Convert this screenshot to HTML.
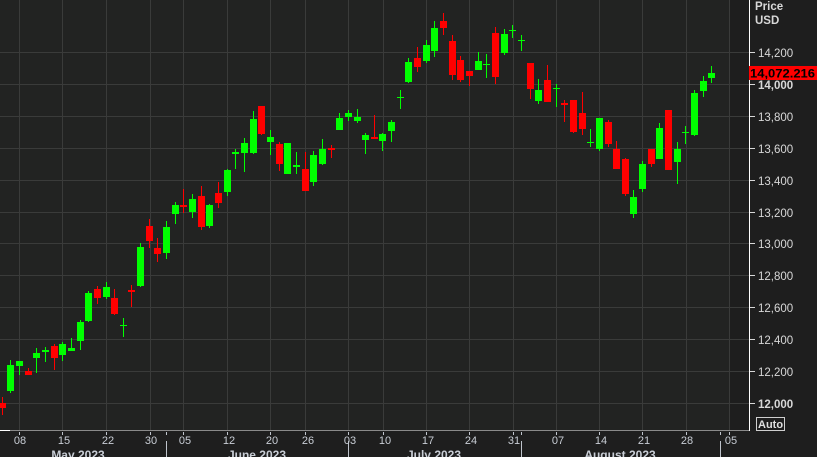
<!DOCTYPE html>
<html><head><meta charset="utf-8"><style>
html,body{margin:0;padding:0;background:#1e1e1e;width:817px;height:457px;overflow:hidden}
svg{display:block;font-family:"Liberation Sans",sans-serif}
</style></head><body>
<svg width="817" height="457" viewBox="0 0 817 457" xmlns="http://www.w3.org/2000/svg">
<rect x="0" y="0" width="817" height="457" fill="#1e1e1e"/>
<rect x="0" y="0" width="729" height="430" fill="#222322"/>
<g stroke="#3a3b3a" stroke-width="1">
<line x1="0" y1="52.5" x2="749" y2="52.5"/><line x1="0" y1="84.5" x2="749" y2="84.5"/><line x1="0" y1="116.5" x2="749" y2="116.5"/><line x1="0" y1="148.5" x2="749" y2="148.5"/><line x1="0" y1="180.5" x2="749" y2="180.5"/><line x1="0" y1="212.5" x2="749" y2="212.5"/><line x1="0" y1="243.5" x2="749" y2="243.5"/><line x1="0" y1="275.5" x2="749" y2="275.5"/><line x1="0" y1="307.5" x2="749" y2="307.5"/><line x1="0" y1="339.5" x2="749" y2="339.5"/><line x1="0" y1="371.5" x2="749" y2="371.5"/><line x1="0" y1="403.5" x2="749" y2="403.5"/>
<line x1="19.5" y1="0" x2="19.5" y2="430"/><line x1="62.5" y1="0" x2="62.5" y2="430"/><line x1="106.5" y1="0" x2="106.5" y2="430"/><line x1="150.5" y1="0" x2="150.5" y2="430"/><line x1="183.5" y1="0" x2="183.5" y2="430"/><line x1="227.5" y1="0" x2="227.5" y2="430"/><line x1="270.5" y1="0" x2="270.5" y2="430"/><line x1="305.5" y1="0" x2="305.5" y2="430"/><line x1="348.5" y1="0" x2="348.5" y2="430"/><line x1="383.5" y1="0" x2="383.5" y2="430"/><line x1="426.5" y1="0" x2="426.5" y2="430"/><line x1="469.5" y1="0" x2="469.5" y2="430"/><line x1="513.5" y1="0" x2="513.5" y2="430"/><line x1="556.5" y1="0" x2="556.5" y2="430"/><line x1="599.5" y1="0" x2="599.5" y2="430"/><line x1="642.5" y1="0" x2="642.5" y2="430"/><line x1="686.5" y1="0" x2="686.5" y2="430"/><line x1="729.5" y1="0" x2="729.5" y2="430"/>
</g>
<g fill="#ff0000">
<rect x="2" y="397" width="1" height="18"/><rect x="-1" y="403" width="7" height="5"/>
<rect x="28" y="368" width="1" height="7"/><rect x="25" y="371" width="7" height="4"/>
<rect x="54" y="344" width="1" height="26"/><rect x="51" y="346" width="7" height="12"/>
<rect x="97" y="286" width="1" height="18"/><rect x="94" y="289" width="7" height="9"/>
<rect x="114" y="289" width="1" height="26"/><rect x="111" y="298" width="7" height="16"/>
<rect x="131" y="285" width="1" height="22"/><rect x="128" y="290" width="7" height="2"/>
<rect x="149" y="219" width="1" height="29"/><rect x="146" y="226" width="7" height="15"/>
<rect x="157" y="238" width="1" height="24"/><rect x="154" y="248" width="7" height="6"/>
<rect x="183" y="189" width="1" height="24"/><rect x="180" y="205" width="7" height="2"/>
<rect x="201" y="186" width="1" height="44"/><rect x="198" y="196" width="7" height="31"/>
<rect x="218" y="182" width="1" height="26"/><rect x="215" y="193" width="7" height="10"/>
<rect x="261" y="106" width="1" height="29"/><rect x="258" y="106" width="7" height="28"/>
<rect x="279" y="142" width="1" height="29"/><rect x="276" y="144" width="7" height="20"/>
<rect x="305" y="152" width="1" height="39"/><rect x="302" y="169" width="7" height="22"/>
<rect x="331" y="145" width="1" height="13"/><rect x="328" y="148" width="7" height="2"/>
<rect x="374" y="115" width="1" height="24"/><rect x="371" y="137" width="7" height="2"/>
<rect x="417" y="47" width="1" height="25"/><rect x="414" y="58" width="7" height="9"/>
<rect x="443" y="13" width="1" height="22"/><rect x="440" y="21" width="7" height="7"/>
<rect x="452" y="35" width="1" height="45"/><rect x="449" y="41" width="7" height="34"/>
<rect x="460" y="56" width="1" height="26"/><rect x="457" y="60" width="7" height="20"/>
<rect x="469" y="71" width="1" height="15"/><rect x="466" y="71" width="7" height="5"/>
<rect x="495" y="27" width="1" height="57"/><rect x="492" y="33" width="7" height="44"/>
<rect x="530" y="63" width="1" height="36"/><rect x="527" y="63" width="7" height="26"/>
<rect x="547" y="65" width="1" height="37"/><rect x="544" y="80" width="7" height="22"/>
<rect x="564" y="100" width="1" height="22"/><rect x="561" y="103" width="7" height="2"/>
<rect x="573" y="100" width="1" height="33"/><rect x="570" y="100" width="7" height="32"/>
<rect x="582" y="92" width="1" height="43"/><rect x="579" y="113" width="7" height="16"/>
<rect x="608" y="120" width="1" height="27"/><rect x="605" y="122" width="7" height="22"/>
<rect x="616" y="141" width="1" height="28"/><rect x="613" y="149" width="7" height="20"/>
<rect x="625" y="158" width="1" height="38"/><rect x="622" y="159" width="7" height="35"/>
<rect x="651" y="149" width="1" height="18"/><rect x="648" y="149" width="7" height="15"/>
<rect x="668" y="110" width="1" height="60"/><rect x="665" y="110" width="7" height="60"/>
</g>
<g fill="#00ff00">
<rect x="10" y="360" width="1" height="33"/><rect x="7" y="365" width="7" height="26"/>
<rect x="19" y="361" width="1" height="14"/><rect x="16" y="361" width="7" height="5"/>
<rect x="36" y="348" width="1" height="25"/><rect x="33" y="353" width="7" height="5"/>
<rect x="45" y="347" width="1" height="15"/><rect x="42" y="350" width="7" height="2"/>
<rect x="62" y="342" width="1" height="19"/><rect x="59" y="344" width="7" height="11"/>
<rect x="71" y="338" width="1" height="13"/><rect x="68" y="348" width="7" height="3"/>
<rect x="80" y="320" width="1" height="30"/><rect x="77" y="322" width="7" height="19"/>
<rect x="88" y="291" width="1" height="31"/><rect x="85" y="293" width="7" height="28"/>
<rect x="106" y="282" width="1" height="17"/><rect x="103" y="287" width="7" height="10"/>
<rect x="123" y="318" width="1" height="19"/><rect x="120" y="325" width="7" height="1"/>
<rect x="140" y="243" width="1" height="44"/><rect x="137" y="247" width="7" height="39"/>
<rect x="166" y="221" width="1" height="38"/><rect x="163" y="227" width="7" height="26"/>
<rect x="175" y="202" width="1" height="22"/><rect x="172" y="205" width="7" height="9"/>
<rect x="192" y="194" width="1" height="24"/><rect x="189" y="199" width="7" height="13"/>
<rect x="209" y="204" width="1" height="24"/><rect x="206" y="205" width="7" height="21"/>
<rect x="227" y="169" width="1" height="27"/><rect x="224" y="170" width="7" height="22"/>
<rect x="235" y="149" width="1" height="20"/><rect x="232" y="152" width="7" height="2"/>
<rect x="244" y="138" width="1" height="34"/><rect x="241" y="143" width="7" height="10"/>
<rect x="253" y="111" width="1" height="43"/><rect x="250" y="119" width="7" height="34"/>
<rect x="270" y="130" width="1" height="25"/><rect x="267" y="137" width="7" height="5"/>
<rect x="287" y="143" width="1" height="31"/><rect x="284" y="143" width="7" height="31"/>
<rect x="296" y="152" width="1" height="22"/><rect x="293" y="165" width="7" height="2"/>
<rect x="313" y="151" width="1" height="35"/><rect x="310" y="155" width="7" height="27"/>
<rect x="322" y="139" width="1" height="26"/><rect x="319" y="149" width="7" height="15"/>
<rect x="339" y="113" width="1" height="17"/><rect x="336" y="118" width="7" height="12"/>
<rect x="348" y="110" width="1" height="11"/><rect x="345" y="113" width="7" height="4"/>
<rect x="357" y="109" width="1" height="14"/><rect x="354" y="117" width="7" height="4"/>
<rect x="365" y="133" width="1" height="21"/><rect x="362" y="135" width="7" height="5"/>
<rect x="382" y="133" width="1" height="18"/><rect x="379" y="134" width="7" height="7"/>
<rect x="391" y="120" width="1" height="22"/><rect x="388" y="122" width="7" height="9"/>
<rect x="400" y="90" width="1" height="19"/><rect x="397" y="97" width="7" height="1"/>
<rect x="408" y="58" width="1" height="25"/><rect x="405" y="62" width="7" height="20"/>
<rect x="426" y="40" width="1" height="23"/><rect x="423" y="45" width="7" height="16"/>
<rect x="434" y="21" width="1" height="36"/><rect x="431" y="28" width="7" height="23"/>
<rect x="478" y="52" width="1" height="18"/><rect x="475" y="61" width="7" height="9"/>
<rect x="486" y="54" width="1" height="24"/><rect x="483" y="64" width="7" height="1"/>
<rect x="504" y="29" width="1" height="26"/><rect x="501" y="34" width="7" height="19"/>
<rect x="512" y="25" width="1" height="13"/><rect x="509" y="30" width="7" height="1"/>
<rect x="521" y="35" width="1" height="16"/><rect x="518" y="40" width="7" height="1"/>
<rect x="538" y="79" width="1" height="25"/><rect x="535" y="90" width="7" height="11"/>
<rect x="556" y="84" width="1" height="23"/><rect x="553" y="88" width="7" height="1"/>
<rect x="590" y="129" width="1" height="18"/><rect x="587" y="142" width="7" height="1"/>
<rect x="599" y="118" width="1" height="33"/><rect x="596" y="118" width="7" height="31"/>
<rect x="633" y="190" width="1" height="28"/><rect x="630" y="197" width="7" height="17"/>
<rect x="642" y="161" width="1" height="31"/><rect x="639" y="164" width="7" height="25"/>
<rect x="659" y="123" width="1" height="36"/><rect x="656" y="128" width="7" height="31"/>
<rect x="677" y="142" width="1" height="42"/><rect x="674" y="149" width="7" height="13"/>
<rect x="685" y="126" width="1" height="18"/><rect x="682" y="132" width="7" height="1"/>
<rect x="694" y="90" width="1" height="46"/><rect x="691" y="93" width="7" height="42"/>
<rect x="703" y="76" width="1" height="21"/><rect x="700" y="81" width="7" height="10"/>
<rect x="711" y="66" width="1" height="17"/><rect x="708" y="73" width="7" height="5"/>
</g>
<rect x="10" y="430" width="739" height="1" fill="#8a8a8a"/>
<rect x="0" y="430" width="10" height="1" fill="#ffffff"/>
<rect x="749" y="0" width="1" height="431" fill="#ffffff"/>
<g fill="#d8d8d8">
<rect x="750" y="52" width="5" height="1"/><rect x="750" y="84" width="5" height="1"/><rect x="750" y="116" width="5" height="1"/><rect x="750" y="148" width="5" height="1"/><rect x="750" y="180" width="5" height="1"/><rect x="750" y="212" width="5" height="1"/><rect x="750" y="243" width="5" height="1"/><rect x="750" y="275" width="5" height="1"/><rect x="750" y="307" width="5" height="1"/><rect x="750" y="339" width="5" height="1"/><rect x="750" y="371" width="5" height="1"/><rect x="750" y="403" width="5" height="1"/>
</g>
<g fill="#d8d8d8" font-size="11.5">
<text x="755" y="10" font-weight="bold">Price</text>
<text x="755" y="24" font-weight="bold">USD</text>
<text x="758" y="57">14,200</text>
<text x="758" y="89" font-weight="bold">14,000</text>
<text x="758" y="121">13,800</text>
<text x="758" y="153">13,600</text>
<text x="758" y="185">13,400</text>
<text x="758" y="217">13,200</text>
<text x="758" y="248">13,000</text>
<text x="758" y="280">12,800</text>
<text x="758" y="312">12,600</text>
<text x="758" y="344">12,400</text>
<text x="758" y="376">12,200</text>
<text x="758" y="408" font-weight="bold">12,000</text>
</g>
<rect x="749" y="66" width="68" height="14" fill="#ff0000"/>
<text x="750" y="77.5" font-size="12" font-weight="bold" fill="#000" textLength="65" lengthAdjust="spacingAndGlyphs">14,072.216</text>
<rect x="756.5" y="417.5" width="28" height="13" fill="none" stroke="#cfcfcf" stroke-width="1"/>
<text x="758" y="428" font-size="11" font-weight="bold" fill="#e0e0e0">Auto</text>
<g fill="#bfc4cc">
<rect x="19" y="432" width="1" height="3"/><rect x="62" y="432" width="1" height="3"/><rect x="106" y="432" width="1" height="3"/><rect x="150" y="432" width="1" height="3"/><rect x="183" y="432" width="1" height="3"/><rect x="227" y="432" width="1" height="3"/><rect x="270" y="432" width="1" height="3"/><rect x="305" y="432" width="1" height="3"/><rect x="348" y="432" width="1" height="3"/><rect x="383" y="432" width="1" height="3"/><rect x="426" y="432" width="1" height="3"/><rect x="469" y="432" width="1" height="3"/><rect x="513" y="432" width="1" height="3"/><rect x="556" y="432" width="1" height="3"/><rect x="599" y="432" width="1" height="3"/><rect x="642" y="432" width="1" height="3"/><rect x="686" y="432" width="1" height="3"/><rect x="729" y="432" width="1" height="3"/>
<rect x="166" y="432" width="1" height="3"/><rect x="521" y="432" width="1" height="3"/><rect x="720" y="432" width="1" height="3"/>
<rect x="166" y="441" width="1" height="16"/><rect x="348" y="441" width="1" height="16"/><rect x="521" y="441" width="1" height="16"/><rect x="720" y="441" width="1" height="16"/>
</g>
<g fill="#c9ced6" font-size="11" text-anchor="middle">
<text x="20" y="444">08</text><text x="64" y="444">15</text><text x="108" y="444">22</text><text x="151" y="444">30</text><text x="185" y="444">05</text><text x="229" y="444">12</text><text x="272" y="444">20</text><text x="308" y="444">26</text><text x="350" y="444">03</text><text x="385" y="444">10</text><text x="428" y="444">17</text><text x="471" y="444">24</text><text x="514" y="444">31</text><text x="558" y="444">07</text><text x="601" y="444">14</text><text x="644" y="444">21</text><text x="687" y="444">28</text><text x="731" y="444">05</text>
</g>
<g fill="#c9ced6" font-size="12" font-weight="bold" text-anchor="middle">
<text x="78" y="459">May 2023</text><text x="257" y="459">June 2023</text><text x="434" y="459">July 2023</text><text x="620" y="459">August 2023</text>
</g>
</svg>
</body></html>
